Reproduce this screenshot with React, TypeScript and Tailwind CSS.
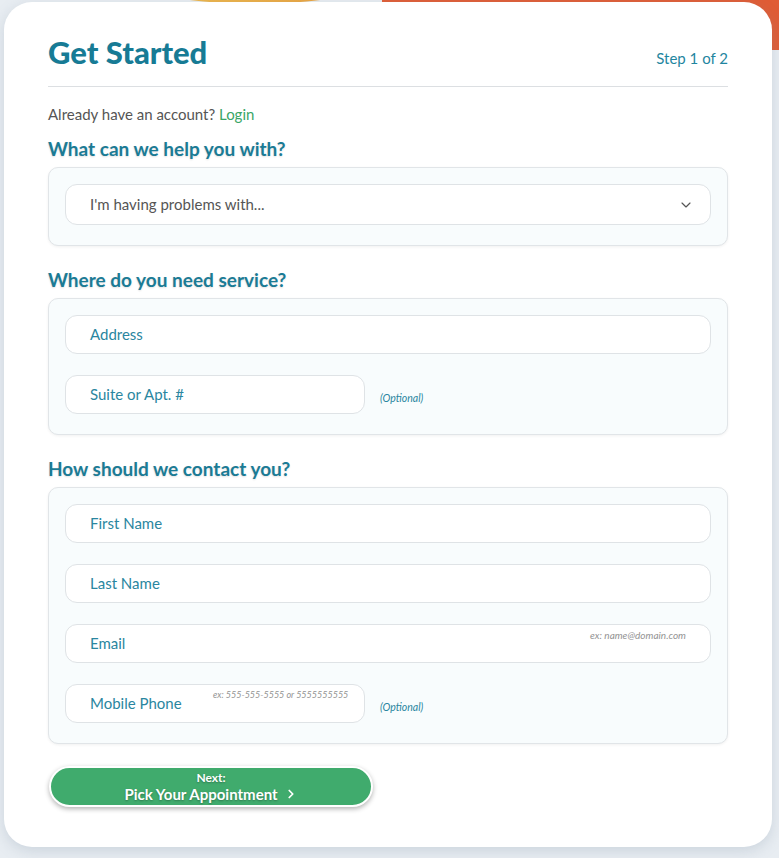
import { ChevronDown, ChevronRight } from 'lucide-react';

const font = { fontFamily: '"Source Sans Pro", Lato, "Noto Sans", sans-serif' };

function Field({ label, hint, hintClass }: { label: string; hint?: string; hintClass?: string }) {
  return (
    <div className="relative h-[39px] rounded-[12px] border border-[#dfe3e6] bg-white flex items-center pl-[24px]">
      <span className="text-[15px] text-[#2a86a0]">{label}</span>
      {hint && <span className={`absolute top-[3px] italic text-[#939393] ${hintClass}`}>{hint}</span>}
    </div>
  );
}

function Optional() {
  return <span className="text-[10.5px] italic text-[#2a86a0] ml-[15px] mt-[8px]">(Optional)</span>;
}

function Heading({ children }: { children: string }) {
  return (
    <h2 className="text-[19px] leading-[24px] font-bold text-[#1b7b95]" style={{ textShadow: '0 1px 2px rgba(0,0,0,0.12)' }}>
      {children}
    </h2>
  );
}

export default function App() {
  return (
    <div className="relative min-h-[858px] bg-[#e8edf2] overflow-hidden" style={font}>
      {/* decorative shapes behind the card */}
      <div className="absolute left-[120px] top-[-60px] w-[270px] h-[64px] rounded-[50%] bg-gradient-to-r from-[#f0c050] to-[#e79a3a]" />
      <div className="absolute left-[382px] top-[-40px] w-[440px] h-[90px] rounded-bl-[40px] bg-[#e05c35]" />

      <div className="relative ml-[4px] mt-[2px] w-[768px] rounded-[28px] bg-white px-[44px] pt-[30px] pb-[40px] shadow-[0_4px_14px_rgba(120,140,160,0.25)]">
        {/* header */}
        <div className="flex items-baseline justify-between border-b border-[#dcdfe2] pb-[14px]">
          <h1 className="text-[31px] leading-[40px] font-black text-[#177b95]">Get Started</h1>
          <span className="text-[15px] text-[#1f86a0]">Step 1 of 2</span>
        </div>

        <p className="mt-[17px] text-[15px] leading-[20px] text-[#555]">
          Already have an account? <a className="text-[#3aa666]">Login</a>
        </p>

        <div className="mt-[13px]">
          <Heading>What can we help you with?</Heading>
        </div>
        <div className="mt-[6px] rounded-[10px] border border-[#e1e5e8] bg-[#f8fcfd] px-[16px] pt-[16px] pb-[20px] shadow-[0_1px_3px_rgba(0,0,0,0.06)]">
          <div className="h-[41px] rounded-[12px] border border-[#dfe3e6] bg-white flex items-center justify-between pl-[24px] pr-[16px]">
            <span className="text-[15px] text-[#555]">I'm having problems with...</span>
            <ChevronDown className="w-[16px] h-[16px] text-[#555]" strokeWidth={1.75} />
          </div>
        </div>

        <div className="mt-[22px]">
          <Heading>Where do you need service?</Heading>
        </div>
        <div className="mt-[6px] rounded-[10px] border border-[#e1e5e8] bg-[#f8fcfd] px-[16px] pt-[16px] pb-[20px] shadow-[0_1px_3px_rgba(0,0,0,0.06)] flex flex-col gap-[21px]">
          <Field label="Address" />
          <div className="flex items-center">
            <div className="w-[300px]">
              <Field label="Suite or Apt. #" />
            </div>
            <Optional />
          </div>
        </div>

        <div className="mt-[22px]">
          <Heading>How should we contact you?</Heading>
        </div>
        <div className="mt-[6px] rounded-[10px] border border-[#e1e5e8] bg-[#f8fcfd] px-[16px] pt-[16px] pb-[20px] shadow-[0_1px_3px_rgba(0,0,0,0.06)] flex flex-col gap-[21px]">
          <Field label="First Name" />
          <Field label="Last Name" />
          <Field label="Email" hint="ex: name@domain.com" hintClass="right-[24px] text-[10px]" />
          <div className="flex items-center">
            <div className="w-[300px]">
              <Field label="Mobile Phone" hint="ex: 555-555-5555 or 5555555555" hintClass="left-[147px] text-[9px]" />
            </div>
            <Optional />
          </div>
        </div>

        <button
          className="mt-[22px] ml-[1px] w-[324px] h-[41px] rounded-full border-2 border-white bg-[#40ab6d] text-white font-bold flex flex-col items-center justify-center leading-none shadow-[0_2px_5px_rgba(0,0,0,0.3)]"
          style={{ textShadow: '0 1px 2px rgba(0,0,0,0.3)' }}
        >
          <span className="text-[12px]">Next:</span>
          <span className="text-[15px] mt-[3px] flex items-center gap-[6px]">
            Pick Your Appointment
            <ChevronRight className="w-[14px] h-[14px]" strokeWidth={3} />
          </span>
        </button>
      </div>
    </div>
  );
}
